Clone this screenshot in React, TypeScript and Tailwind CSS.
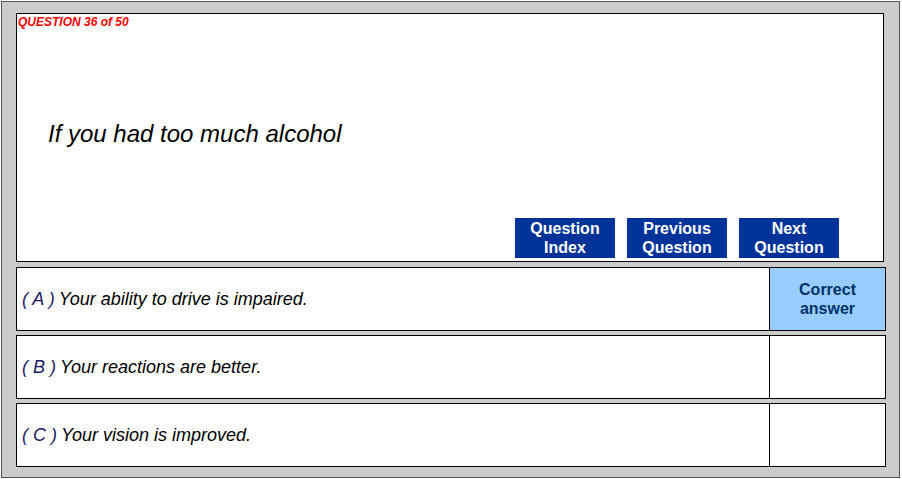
import React from "react";

const options = [
  { letter: "A", text: "Your ability to drive is impaired.", correct: true },
  { letter: "B", text: "Your reactions are better.", correct: false },
  { letter: "C", text: "Your vision is improved.", correct: false },
];

const NavButton: React.FC<{ top: string; bottom: string }> = ({ top, bottom }) => (
  <button className="w-[100px] h-[40px] bg-[#003399] text-white font-bold text-[16px] leading-[19px] flex flex-col items-center justify-center">
    <span>{top}</span>
    <span>{bottom}</span>
  </button>
);

export default function App() {
  return (
    <div className="w-[902px] h-[479px] bg-white pt-px pl-px font-['Liberation_Sans',Arial,sans-serif]">
      <div className="w-[899px] h-[477px] border border-[#555555] bg-[#cccccc] pl-[14px] pt-[11px] flex flex-col">
        <div className="w-[868px] h-[249px] border border-black bg-white flex flex-col">
          <div className="text-[12px] leading-[14px] font-bold italic text-[#ff0000] pl-px pt-[1px]">
            QUESTION 36 of 50
          </div>
          <div className="pl-[31px] pt-[91px] text-[24px] leading-[28px] italic text-black">
            If you had too much alcohol
          </div>
          <div className="mt-auto mb-[3px] ml-[498px] flex gap-[12px]">
            <NavButton top="Question" bottom="Index" />
            <NavButton top="Previous" bottom="Question" />
            <NavButton top="Next" bottom="Question" />
          </div>
        </div>

        <div className="mt-[5px] flex flex-col gap-[4px]">
          {options.map((o) => (
            <div
              key={o.letter}
              className="w-[870px] h-[64px] border border-black bg-white flex"
            >
              <div className="flex-1 flex items-center pl-[5px] text-[18px] italic text-black">
                <span className="text-[#1a1a66]">( {o.letter} )</span>
                <span className="ml-[4px]">{o.text}</span>
              </div>
              <div
                className={
                  "w-[116px] border-l border-black flex flex-col items-center justify-center text-[16px] leading-[19px] font-bold text-[#003366] " +
                  (o.correct ? "bg-[#99ccff]" : "bg-white")
                }
              >
                {o.correct && (
                  <>
                    <span>Correct</span>
                    <span>answer</span>
                  </>
                )}
              </div>
            </div>
          ))}
        </div>
      </div>
    </div>
  );
}
